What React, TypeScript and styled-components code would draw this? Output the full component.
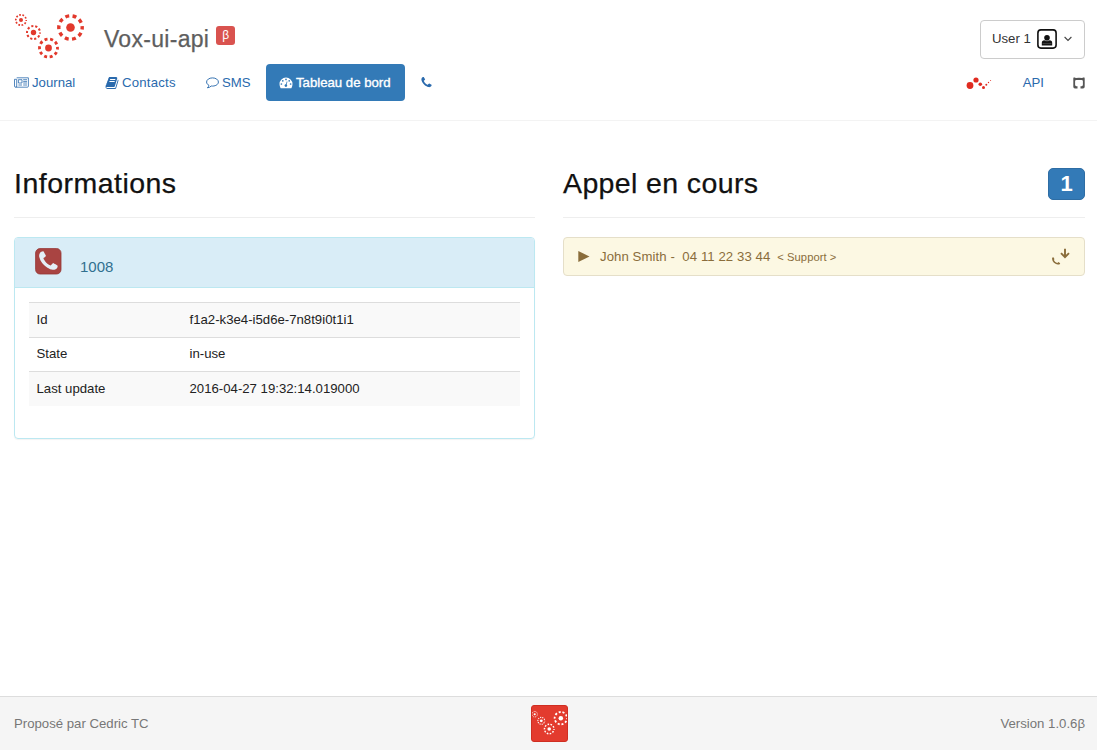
import React from "react";
import styled, { createGlobalStyle } from "styled-components";

const GlobalStyle = createGlobalStyle`
  * { box-sizing: border-box; }
  body {
    margin: 0;
    background: #fff;
    color: #222;
    font-family: "Liberation Sans", Arial, sans-serif;
    font-size: 13.2px;
    line-height: 18px;
  }
  svg { display: block; flex: none; }
`;

const Page = styled.div`
  display: flex;
  flex-direction: column;
  height: 750px;
`;

const Header = styled.header`
  height: 121px;
  padding: 12px 12px 0 14px;
  border-bottom: 1px solid #f3f3f3;
`;

const Bar = styled.div<{ $height: number }>`
  display: flex;
  align-items: center;
  justify-content: space-between;
  height: ${(p) => p.$height}px;
`;

const Brand = styled.div`
  display: flex;
  align-items: center;
`;

const Title = styled.span`
  margin: 6px 0 0 18px;
  font-size: 23px;
  line-height: 28px;
  letter-spacing: 0.3px;
  color: #5e5e5e;
  -webkit-text-stroke: 0.25px #5e5e5e;
`;

const BetaLabel = styled.span`
  width: 19px;
  height: 19px;
  margin: -1px 0 0 7px;
  border-radius: 3px;
  background: #d9534f;
  color: #fff;
  font-size: 12px;
  line-height: 19px;
  text-align: center;
`;

const UserButton = styled.button`
  display: flex;
  align-items: center;
  width: 105px;
  height: 39px;
  margin-top: 6px;
  padding: 0 11px;
  border: 1px solid #ccc;
  border-radius: 4px;
  background: #fff;
  color: #333;
  font: inherit;
  white-space: nowrap;
`;

const UserName = styled.span`
  width: 45px;
  text-align: left;
`;

const NavGroup = styled.nav`
  display: flex;
  align-items: center;
`;

const NavLink = styled.a<{ $active?: boolean; $left: number; $spacing?: number }>`
  display: flex;
  align-items: center;
  gap: 3px;
  height: 37px;
  margin-left: ${(p) => p.$left}px;
  padding: ${(p) => (p.$active ? "0 13px" : "0")};
  width: ${(p) => (p.$active ? "139px" : "auto")};
  border-radius: 4px;
  background: ${(p) => (p.$active ? "#337ab7" : "transparent")};
  color: ${(p) => (p.$active ? "#fff" : "#2a6aad")};
  letter-spacing: ${(p) => p.$spacing ?? 0}px;
  white-space: nowrap;
  -webkit-text-stroke: ${(p) => (p.$active ? "0.35px #fff" : "0")};
`;

const NavItem = styled.span<{ $width: number }>`
  display: flex;
  width: ${(p) => p.$width}px;
`;

const Main = styled.main`
  display: grid;
  grid-template-columns: 521px 522px;
  gap: 28px;
  flex: 1;
  align-items: start;
  padding: 46px 12px 0 14px;
`;

const SectionHeader = styled.div`
  display: flex;
  justify-content: space-between;
  height: 51px;
  margin-bottom: 19px;
  border-bottom: 1px solid #eee;
`;

const Heading = styled.h2<{ $spacing: number }>`
  margin: 0;
  font-size: 28.5px;
  font-weight: 400;
  line-height: 32px;
  letter-spacing: ${(p) => p.$spacing}px;
  color: #111;
  -webkit-text-stroke: 0.25px #111;
`;

const Count = styled.span`
  width: 37px;
  height: 32px;
  margin-top: 1px;
  border: 1px solid #2e6da4;
  border-radius: 5px;
  background: #337ab7;
  color: #fff;
  font-size: 22px;
  font-weight: 700;
  line-height: 30px;
  text-align: center;
`;

const Panel = styled.article`
  height: 202px;
  border: 1px solid #bce8f1;
  border-radius: 4px;
  box-shadow: 0 1px 1px rgba(0, 0, 0, 0.05);
  overflow: hidden;
`;

const PanelHeader = styled.div`
  display: flex;
  height: 50px;
  padding: 10px 20px;
  border-bottom: 1px solid #bce8f1;
  background: #d9edf7;
`;

const Extension = styled.span`
  margin: 10px 0 0 18px;
  font-size: 15px;
  color: #31708f;
`;

const Table = styled.table`
  width: 491px;
  margin: 14px 0 0 14px;
  border-collapse: collapse;
`;

const Row = styled.tr`
  height: 34.6px;
  border-top: 1px solid #ddd;
  &:nth-child(odd) { background: #f9f9f9; }
`;

const Cell = styled.td<{ $width?: number }>`
  width: ${(p) => (p.$width ? `${p.$width}px` : "auto")};
  padding: 0 7.5px;
`;

const Call = styled.div`
  display: flex;
  align-items: center;
  height: 39px;
  padding: 0 14px;
  border: 1px solid #e5dfc9;
  border-radius: 4px;
  background: #fcf8e3;
  color: #8a6d3b;
  white-space: pre;
`;

const Caller = styled.span`
  margin-left: 10px;
  letter-spacing: 0.07px;
`;

const Queue = styled.span`
  flex: 1;
  margin-left: 7px;
  font-size: 11.2px;
  letter-spacing: 0.05px;
`;

const Footer = styled.footer`
  display: grid;
  grid-template-columns: 1fr auto 1fr;
  align-items: center;
  height: 54px;
  padding: 0 12px 0 14px;
  border-top: 1px solid #ddd;
  background: #f5f5f5;
  color: #777;
`;

const FooterText = styled.span<{ $end?: boolean }>`
  text-align: ${(p) => (p.$end ? "right" : "left")};
`;

const LogoTile = styled.div`
  display: flex;
  align-items: center;
  justify-content: center;
  width: 37px;
  height: 37px;
  padding-bottom: 1px;
  border: 1px solid #cf2e22;
  border-radius: 3px;
  background: #e33b2e;
  overflow: hidden;
`;

const gears = [
  { x: 7, y: 8, r: 5.2, w: 1.7, dot: 2, n: 10 },
  { x: 19.5, y: 20.5, r: 6.5, w: 2, dot: 2.7, n: 10 },
  { x: 34.5, y: 36, r: 9, w: 2.8, dot: 3.4, n: 10 },
  { x: 56.5, y: 15.5, r: 11.7, w: 3.4, dot: 4.3, n: 10 },
];

function Gears({ color, width }: { color: string; width: number }) {
  return (
    <svg width={width} height={(width * 48) / 72} viewBox="0 0 72 48">
      {gears.map((g) => {
        const step = (2 * Math.PI * g.r) / g.n;
        return (
          <g key={g.x}>
            <circle cx={g.x} cy={g.y} r={g.dot} fill={color} />
            <circle cx={g.x} cy={g.y} r={g.r} fill="none" stroke={color} strokeWidth={g.w}
              strokeDasharray={`${step * 0.53} ${step * 0.47}`} strokeDashoffset={step * 0.26} />
          </g>
        );
      })}
    </svg>
  );
}

const phonePath =
  "M1600 1240q0 27-10 70.5t-21 68.5q-21 50-122 106-94 51-186 51-27 0-53-3.5t-57-12.5-47-14.5-55.5-20.5-49.5-18q-98-35-175-83-127-79-264-216t-216-264q-48-77-83-175-3-9-18-49.5t-20.5-55.5-14.5-47-12.5-57-3.5-53q0-92 51-186 56-101 106-122 25-11 68.5-21t70.5-10q14 0 21 3 18 6 53 76 11 19 30 54t35 63.5 31 53.5q3 4 17.5 25t21.5 35.5 7 28.5q0 20-28.5 50t-62 55-62 53-28.5 46q0 9 5 22.5t8.5 20.5 14 24 11.5 19q76 137 174 235t235 174q2 1 19 11.5t24 14 20.5 8.5 22.5 5q18 0 46-28.5t53-62 55-62 50-28.5q14 0 28.5 7t35.5 21.5 25 17.5q25 15 53.5 31t63.5 35 54 30q70 35 76 53 3 7 3 21z";

const bookPath =
  "M1703 478q40 57 18 129l-275 906q-19 64-76.5 107.5t-122.5 43.5h-923q-77 0-148.5-53.5t-99.5-131.5q-24-67-2-127 0-4 3-27t4-37q1-8-3-21.5t-3-19.5q2-11 8-21t16.5-23.5 16.5-23.5q23-38 45-91.5t30-91.5q3-10 .5-30t-.5-28q3-11 17-28t17-23q21-36 42-92t25-90q1-9-2.5-32t.5-28q4-13 22-30.5t22-22.5q19-26 42.5-84.5t27.5-96.5q1-8-3-25.5t-2-26.5q2-8 9-18t18-23 17-21q8-12 16.5-30.5t15-35 16-36 19.5-32 26.5-23.5 36-11.5 47.5 5.5l-1 3q38-9 51-9h761q74 0 114 56t18 130l-274 906q-36 119-71.5 153.5t-128.5 34.5h-869q-27 0-38 15-11 16-1 43 24 70 144 70h923q29 0 56-15.5t35-41.5l300-987q7-22 5-57 38 15 59 43zm-1064 2q-4 13 2 22.5t20 9.5h608q13 0 25.5-9.5t16.5-22.5l21-64q4-13-2-22.5t-20-9.5h-608q-13 0-25.5 9.5t-16.5 22.5zm-83 256q-4 13 2 22.5t20 9.5h608q13 0 25.5-9.5t16.5-22.5l21-64q4-13-2-22.5t-20-9.5h-608q-13 0-25.5 9.5t-16.5 22.5z";

const Glyph = ({ d, size = 13 }: { d: string; size?: number }) => (
  <svg width={size} height={size} viewBox="0 0 1792 1792" fill="currentColor"><path d={d} /></svg>
);

const NewsIcon = () => (
  <svg width="15" height="11" viewBox="0 0 15 11" fill="none" stroke="currentColor" strokeWidth="0.8">
    <path d="M2.7 .8H14.4V9.2Q14.4 10.2 13.4 10.2H1.6Q.5 10.2.5 9V2.3H2.7V9Q2.7 10.2 1.6 10.2" />
    <path d="M4.4 2.7H8V6H4.4ZM9.2 2.7H13M9.2 4.4H13M9.2 6H13M4.4 8H8M9.2 8H13" />
  </svg>
);

const CommentIcon = () => (
  <svg width="13" height="12" viewBox="0 0 13 12" fill="none" stroke="currentColor" strokeWidth="0.95">
    <path d="M6.5.9C3.2.9.6 2.7.6 5c0 1.4.9 2.6 2.3 3.3-.2 1-.7 1.8-1.5 2.5 1.6-.1 2.8-.7 3.8-1.8 3.8.5 7.2-1.3 7.2-4C12.4 2.7 9.8.9 6.5.9Z" />
  </svg>
);

const DashboardIcon = () => (
  <svg width="14" height="12" viewBox="0 0 14 12">
    <path d="M7 .5A6.5 6.5 0 0 0 .5 7c0 1.5.4 2.8 1 3.9.1.2.3.3.5.3h10c.2 0 .4-.1.5-.3.6-1.1 1-2.4 1-3.9A6.5 6.5 0 0 0 7 .5Z" fill="#fff" />
    <g fill="#337ab7"><circle cx="2.4" cy="7" r=".85" /><circle cx="3.8" cy="3.8" r=".85" /><circle cx="7" cy="2.4" r=".85" /><circle cx="10.2" cy="3.8" r=".85" /><circle cx="11.6" cy="7" r=".85" /><circle cx="6.9" cy="8.6" r="1.3" /></g>
    <path d="M7 8.5 8 4.5" stroke="#337ab7" strokeWidth=".8" />
  </svg>
);

const AvatarIcon = () => (
  <svg width="20" height="20" viewBox="0 0 20 20">
    <rect x=".9" y=".9" width="18.2" height="18.2" rx="3" fill="#fff" stroke="#111" strokeWidth="1.6" />
    <circle cx="10" cy="8.8" r="2.8" fill="#111" />
    <path d="M4.8 16.5V14q0-2.8 2.7-2.8 2.5 1.2 5 0 2.7 0 2.7 2.8v2.5Z" fill="#111" />
    <path d="M7.2 11.3q2.8 1.7 5.6 0M5.5 14.6h9" fill="none" stroke="#888" strokeWidth=".4" />
  </svg>
);

const ChevronIcon = () => (
  <svg width="8" height="6" viewBox="0 0 8 6" fill="none" stroke="#444" strokeWidth="1.1"><path d="m.6 1 3.4 3.5L7.4 1" /></svg>
);

const DotsIcon = () => (
  <svg width="26" height="14" viewBox="0 0 26 14" fill="#e02b20">
    <circle cx="4" cy="9.5" r="3.4" /><circle cx="10" cy="4" r="2.6" /><circle cx="14.3" cy="8.3" r="1.8" />
    <circle cx="17.5" cy="11.5" r="1.5" /><circle cx="20.3" cy="8.8" r="1" /><circle cx="22.5" cy="6.5" r=".7" /><circle cx="24.6" cy="4.4" r=".5" />
  </svg>
);

const GithubIcon = () => (
  <svg width="12" height="12" viewBox="0 0 12 12">
    <path
      fillRule="evenodd"
      fill="#555"
      d="M.8.3 3 1Q6 .5 9 1L11.2.3Q12 1.6 11.7 3V9.8Q11.7 11.6 10 11.6H7.5V9.2H8.6Q9.9 9.2 9.9 7.8V4.2Q9.9 2.9 8.6 2.9H3.4Q2.1 2.9 2.1 4.2V7.8Q2.1 9.2 3.4 9.2H4.5V11.6H2Q.3 11.6.3 9.8V3Q0 1.6.8.3Z"
    />
  </svg>
);

const PhoneSquareIcon = () => (
  <svg width="27" height="27" viewBox="0 0 27 27">
    <rect x=".6" y=".6" width="25.4" height="25.4" rx="4.4" fill="#a94442" stroke="#963634" strokeWidth=".8" />
    <svg x="1.6" y="1.6" width="23.6" height="23.6" viewBox="0 0 1792 1792" fill="#e4eff7"><path d={phonePath} /></svg>
  </svg>
);

const PlayIcon = () => (
  <svg width="12" height="11" viewBox="0 0 12 11" fill="currentColor"><path d="M.3.1 11.5 5.5.3 10.9Z" /></svg>
);

const IncomingIcon = () => (
  <svg width="19" height="18" viewBox="0 0 19 18">
    <path d="M1.7 10.2C2 13.4 4.3 15.6 7.8 16" fill="none" stroke="currentColor" strokeWidth="1.5" />
    <path d="m1 9.8 1.5-.6 1 2-1.2 1ZM6.2 15.2l1.2-1.2 1.8 1.2-.6 1.3Z" fill="currentColor" />
    <path d="M14 .8V9M10 5.1l4 4 4-4" fill="none" stroke="currentColor" strokeWidth="1.9" />
  </svg>
);

const details = [
  { label: "Id", value: "f1a2-k3e4-i5d6e-7n8t9i0t1i1" },
  { label: "State", value: "in-use" },
  { label: "Last update", value: "2016-04-27 19:32:14.019000" },
];

export default function App() {
  return (
    <Page>
      <GlobalStyle />
      <Header>
        <Bar $height={48}>
          <Brand>
            <Gears color="#e2392c" width={72} />
            <Title>Vox-ui-api</Title>
            <BetaLabel>β</BetaLabel>
          </Brand>
          <UserButton><UserName>User 1</UserName><AvatarIcon /><span>&nbsp;&nbsp;</span><ChevronIcon /></UserButton>
        </Bar>
        <Bar $height={45}>
          <NavGroup>
            <NavLink $left={0}><NewsIcon /><NavItem $width={44}>Journal</NavItem></NavLink>
            <NavLink $left={29} $spacing={0.22}><Glyph d={bookPath} size={14} /><NavItem $width={54}>Contacts</NavItem></NavLink>
            <NavLink $left={30}><CommentIcon /><NavItem $width={29}>SMS</NavItem></NavLink>
            <NavLink $left={15} $active><DashboardIcon />Tableau de bord</NavLink>
            <NavLink $left={15}><Glyph d={phonePath} /></NavLink>
          </NavGroup>
          <NavGroup>
            <NavLink $left={0}><DotsIcon /></NavLink>
            <NavLink $left={31}>API</NavLink>
            <NavLink $left={29}><GithubIcon /></NavLink>
          </NavGroup>
        </Bar>
      </Header>
      <Main>
        <section>
          <SectionHeader><Heading $spacing={0.48}>Informations</Heading></SectionHeader>
          <Panel>
            <PanelHeader><PhoneSquareIcon /><Extension>1008</Extension></PanelHeader>
            <Table>
              <tbody>
                {details.map((d) => (
                  <Row key={d.label}><Cell $width={153}>{d.label}</Cell><Cell>{d.value}</Cell></Row>
                ))}
              </tbody>
            </Table>
          </Panel>
        </section>
        <section>
          <SectionHeader><Heading $spacing={0.38}>Appel en cours</Heading><Count>1</Count></SectionHeader>
          <Call>
            <PlayIcon />
            <Caller>{"John Smith -  04 11 22 33 44"}</Caller>
            <Queue>{"< Support >"}</Queue>
            <IncomingIcon />
          </Call>
        </section>
      </Main>
      <Footer>
        <FooterText>Proposé par Cedric TC</FooterText>
        <LogoTile><Gears color="#fff" width={38} /></LogoTile>
        <FooterText $end>Version 1.0.6β</FooterText>
      </Footer>
    </Page>
  );
}
